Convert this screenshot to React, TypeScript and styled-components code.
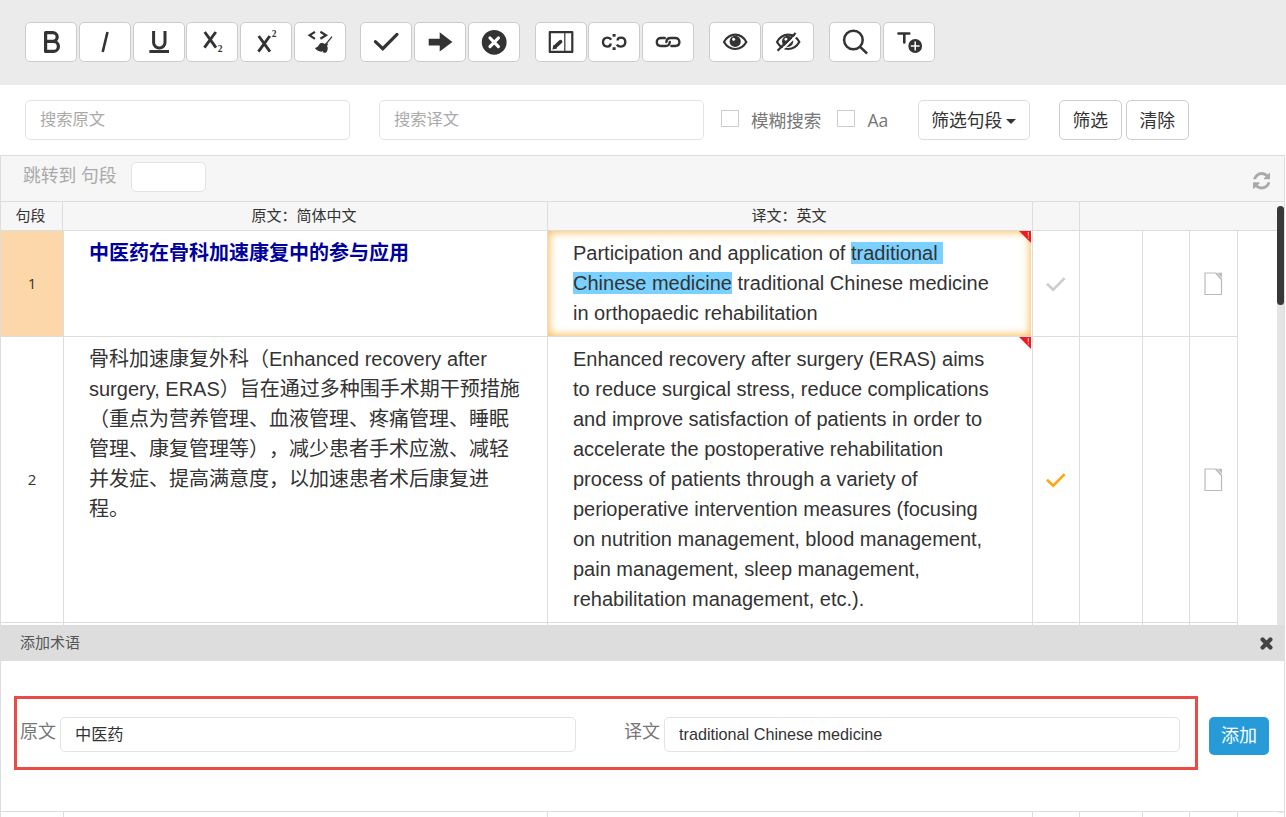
import React from "react";
import styled, { createGlobalStyle } from "styled-components";

const GlobalStyle = createGlobalStyle`
  * { box-sizing: border-box; }
  body {
    margin: 0;
    background: #fff;
    color: #333;
    font-family: "Open Sans", "Noto Sans CJK SC", sans-serif;
    overflow: hidden;
  }
  button, input { font-family: inherit; margin: 0; outline: none; }
`;

const Page = styled.div`
  display: flex;
  flex-direction: column;
  width: 1286px;
  height: 817px;
  overflow: hidden;
`;

const Toolbar = styled.header`
  display: flex;
  align-items: flex-start;
  gap: 14.5px;
  height: 85px;
  padding: 22px 25px 0;
  background: #ebebeb;
`;

const ToolGroup = styled.div`
  display: flex;
  gap: 1.8px;
`;

const ToolButton = styled.button`
  display: flex;
  align-items: center;
  justify-content: center;
  width: 52px;
  height: 40px;
  padding: 0;
  border: 1px solid #ccc;
  border-radius: 5px;
  background: #fff;
  color: #333;
`;

const SearchBar = styled.div`
  display: flex;
  height: 70px;
  padding: 15px 25px 0;
`;

const SearchInput = styled.input`
  width: 325px;
  height: 40px;
  margin-right: 29px;
  padding: 0 14px 2px;
  border: 1px solid #e3e3e3;
  border-radius: 5px;
  font-size: 16.3px;
  color: #333;
  &::placeholder { color: #aaa; opacity: 1; }
  & + & { margin-right: 17px; }
`;

const CheckLabel = styled.label<{ $gap: number }>`
  display: flex;
  align-items: flex-start;
  gap: 12px;
  height: 40px;
  margin-right: ${(p) => p.$gap}px;
  padding-top: 10px;
  color: #777;
  font-size: 17.6px;
  line-height: 20px;
  white-space: nowrap;
`;

const CheckBox = styled.input.attrs({ type: "checkbox" })`
  appearance: none;
  width: 18px;
  height: 17px;
  border: 1px solid #ccc;
  background: #fff;
`;

const FilterButton = styled.button<{ $width: number; $gap: number; $soft?: boolean }>`
  display: flex;
  align-items: center;
  justify-content: center;
  gap: 4px;
  width: ${(p) => p.$width}px;
  height: 40px;
  margin-right: ${(p) => p.$gap}px;
  padding: 0 1px 3px 0;
  border: 1px solid ${(p) => (p.$soft ? "#ddd" : "#ccc")};
  border-radius: 5px;
  background: #fff;
  color: #333;
  font-size: 17.8px;
  white-space: nowrap;
`;

const Caret = styled.i`
  margin-top: 5px;
  border: 5px solid transparent;
  border-top-color: #333;
  border-bottom: 0;
`;

const Editor = styled.main`
  position: relative;
  width: 1285px;
  height: 662px;
  border: 1px solid #ddd;
  border-bottom: 0;
  overflow: hidden;
`;

const JumpBar = styled.div`
  display: flex;
  align-items: flex-start;
  height: 46px;
  padding: 6px 14px 0 22px;
  border-bottom: 1px solid #ddd;
  background: #f6f6f6;
  color: #aaa;
  font-size: 17.8px;
  line-height: 27px;
`;

const JumpInput = styled.input`
  width: 75px;
  height: 30px;
  margin-left: 14px;
  border: 1px solid #e3e3e3;
  border-radius: 5px;
  background: #fff;
`;

const RefreshIcon = styled.svg`
  width: 17.5px;
  height: 17.5px;
  margin: 10px 0 0 auto;
  fill: #aaa;
`;

const HeadRow = styled.div`
  display: grid;
  grid-template-columns: 62px 485px 485px 47px 1fr;
  height: 29px;
  border-bottom: 1px solid #ddd;
  background: #f6f6f6;
`;

const HeadCell = styled.div`
  display: flex;
  align-items: center;
  justify-content: center;
  padding: 0 2px 3px 0;
  border-right: 1px solid #ddd;
  font-size: 15px;
  &:last-child { border-right: 0; }
`;

const Row = styled.div<{ $height: number }>`
  display: grid;
  grid-template-columns: 63px 484px 485px 47px 63px 47px 48px;
  width: 1237px;
  height: ${(p) => p.$height}px;
  border-bottom: 1px solid #ddd;
`;

const Cell = styled.div`
  display: flex;
  align-items: center;
  justify-content: center;
  border-right: 1px solid #ddd;
`;

const NumberCell = styled(Cell)<{ $active?: boolean }>`
  padding-bottom: 2px;
  background: ${(p) => (p.$active ? "#fcd7a9" : "#fff")};
  font-size: 15px;
`;

const TextCell = styled.div<{ $title?: boolean }>`
  position: relative;
  padding: 7px 0 0 25px;
  border-right: 1px solid #ddd;
  color: ${(p) => (p.$title ? "#00009c" : "#333")};
  font-family: "Liberation Sans", "Noto Sans CJK SC", sans-serif;
  font-size: 20px;
  font-weight: ${(p) => (p.$title ? 700 : 400)};
  line-height: 30px;
  white-space: pre;
  text-spacing-trim: space-all;
`;

const Line = styled.div`
  height: 30px;
`;

const Focus = styled.div`
  position: absolute;
  inset: 0 1px 0 0;
  box-shadow: inset 0 0 9px 1px #fdb94e;
`;

const Highlight = styled.mark`
  background: #7ad1ff;
  color: inherit;
`;

const Flag = styled.svg`
  position: absolute;
  top: 0;
  right: 1px;
  width: 12px;
  height: 12px;
`;

const ScrollTrack = styled.div`
  position: absolute;
  top: 50px;
  right: 0;
  width: 7px;
  height: 607px;
  border-radius: 4px;
  background: #e4e4e4;
`;

const ScrollThumb = styled.div`
  height: 99px;
  border-radius: 4px;
  background: #383838;
`;

const TermPanel = styled.section`
  position: absolute;
  left: -1px;
  top: 469px;
  width: 1285px;
  height: 187px;
  border: 1px solid #ddd;
  border-top: 0;
  background: #fff;
`;

const TermHead = styled.div`
  display: flex;
  align-items: center;
  justify-content: space-between;
  height: 36px;
  padding: 0 11px 0 19px;
  background: #ddd;
  color: #555;
  font-size: 15px;
  line-height: 20px;
`;

const TermTitle = styled.span`
  padding-bottom: 2px;
`;

const TermForm = styled.div`
  display: flex;
  align-items: flex-start;
  padding: 35px 15px 0 13px;
`;

const TermFields = styled.div`
  display: flex;
  flex: none;
  width: 1184px;
  height: 74px;
  padding: 18px 0 0 3px;
  border: 3px solid #e84c45;
`;

const TermLabel = styled.label`
  flex: none;
  width: 40px;
  color: #777;
  font-size: 18px;
  line-height: 29px;
  white-space: nowrap;
`;

const TermInput = styled.input<{ $lift?: boolean }>`
  flex: none;
  width: 516px;
  height: 35px;
  margin-right: 48px;
  padding: 0 14px ${(p) => (p.$lift ? 3 : 0)}px;
  border: 1px solid #e3e3e3;
  border-radius: 5px;
  color: #333;
  font-family: "Liberation Sans", "Noto Sans CJK SC", sans-serif;
  font-size: 16.2px;
  &:last-child { margin-right: 0; }
`;

const AddButton = styled.button`
  width: 60px;
  height: 38px;
  margin: 21px 0 0 11px;
  padding: 0 0 5px;
  border: 0;
  border-radius: 5px;
  background: #279bd8;
  color: #fff;
  font-size: 18px;
`;

const IconSvg = styled.svg`
  flex: none;
  width: 32px;
  height: 32px;
  fill: none;
  stroke: currentColor;
  stroke-width: 2.4px;
`;

const Solid = styled.g`
  fill: currentColor;
  stroke: none;
`;

const SmallDigit = styled.text`
  font: 700 9.5px "Liberation Serif", serif;
`;

const EYE = "M5 16c2.7-4.700 6.500-7.300 11.200-7.300S24.700 11.300 27.300 16c-2.600 4.600-6.400 7-11.100 7S7.700 20.600 5 16z";

const toolGroups: React.ReactNode[][] = [
  [
    <path key="bold" strokeWidth="3.2" strokeLinejoin="round" d="M10.6 6.600h7.200a4.400 4.400 0 0 1 0 8.800h-7.200zM10.600 15.400h7.800a5 5 0 0 1 0 10h-7.800z" />,
    <path key="italic" strokeWidth="2.6" d="M13.700 26 18.500 6" />,
    <path key="underline" strokeWidth="3" d="M10.600 5v11.400a5.700 5.600 0 0 0 11.400 0V5M6.400 25.500H26" />,
    <React.Fragment key="sub">
      <path strokeWidth="2.9" d="M8.700 6 20 21.700M19.800 6 8.400 21.700" />
      <Solid><SmallDigit x="21.700" y="26">2</SmallDigit></Solid>
    </React.Fragment>,
    <React.Fragment key="sup">
      <path strokeWidth="2.9" d="M8.700 10 20 25.700M19.800 10 8.400 25.700" />
      <Solid><SmallDigit x="21.700" y="10.600">2</SmallDigit></Solid>
    </React.Fragment>,
    <React.Fragment key="clean">
      <path strokeWidth="2.200" d="M11 5.800 5.600 9.300l5.400 3.500M16.400 5.800l5.600 3.500-5.600 3.500" />
      <path strokeWidth="1.300" d="M28 10.600 22.300 17.600" />
      <Solid>
        <path d="M16 17.500c2-.7 3.600-.4 4.600.4l1.800-1.400 1.600 1.600-.9 1.900c1.200 1.700.6 4.600-.8 6.500-1.400.3-2.800.2-3.800-.3l.7-1.100-2.100.7c-2.400-.6-4.900-1.800-6.200-3.900 2.300-.2 3.200-1.600 5.100-4.400z" />
      </Solid>
    </React.Fragment>,
  ],
  [
    <path key="check" strokeWidth="3.200" strokeLinecap="round" d="m5.400 15.600 7.400 7.100L27 8.400" />,
    <Solid key="next"><path d="M4.700 12.700h11V6.200l12.700 9.700-12.700 9.700v-6H4.700z" /></Solid>,
    <React.Fragment key="cancel">
      <Solid><circle cx="16.200" cy="16.300" r="12.400" /></Solid>
      <path stroke="#fff" strokeWidth="3.200" strokeLinecap="round" d="m12 12 8.400 8.600m0-8.600L12 20.600" />
    </React.Fragment>,
  ],
  [
    <React.Fragment key="edit">
      <path strokeWidth="2.200" strokeLinejoin="round" d="M4.800 6.100h22.500v19.800H4.800z" />
      <path strokeWidth="1.200" d="M19.800 6v20" />
      <path strokeWidth="3.600" strokeLinecap="round" d="m10.200 20.600 5.400-5" />
      <Solid><path d="M7.400 23.600 8.400 19l3.700 3.400z" /></Solid>
    </React.Fragment>,
    <React.Fragment key="unlink">
      <path strokeWidth="2.400" d="M13.300 13.600c-1-1.400-2.200-2-3.900-2-2.700 0-4.400 1.800-4.400 4.500s1.700 4.500 4.400 4.500c1.900 0 3.200-.8 3.200-3" />
      <path strokeWidth="2.400" d="M19.600 14.600c0-2.200 1.300-3 3.200-3 2.700 0 4.500 1.800 4.500 4.500s-1.800 4.500-4.500 4.500c-1.700 0-3-.6-4-2" />
      <Solid><path d="M14.600 7.900h3v2.800h-3zM14.600 21.200h3V24h-3z" /></Solid>
    </React.Fragment>,
    <path key="link" strokeWidth="2.400" strokeLinecap="round" d="M12.800 12H9c-2.500 0-4.200 1.700-4.200 4s1.700 4 4.200 4h4.800c2.400 0 3.800-1.500 4-4M19.400 20h3.800c2.500 0 4.200-1.700 4.200-4s-1.700-4-4.200-4h-4.800c-2.400 0-3.800 1.500-4 4" />,
  ],
  [
    <React.Fragment key="show">
      <path strokeWidth="2.200" d={EYE} />
      <Solid><circle cx="16.200" cy="15.400" r="5.600" /></Solid>
      <circle cx="14.600" cy="13.300" r="1.500" fill="#fff" stroke="none" />
    </React.Fragment>,
    <React.Fragment key="hide">
      <path strokeWidth="2.200" d={EYE} />
      <Solid><circle cx="15.600" cy="15.400" r="5.600" /></Solid>
      <circle cx="14" cy="13.300" r="1.500" fill="#fff" stroke="none" />
      <path stroke="#fff" strokeWidth="2" d="M25.800 8.300 8.500 25.300" />
      <path strokeWidth="2.200" d="M23.600 7 5.500 24.800" />
    </React.Fragment>,
  ],
  [
    <path key="search" strokeWidth="2.500" d="M23.700 14a9.300 9.300 0 1 1-18.600 0 9.300 9.300 0 0 1 18.600 0zM20.800 20.600l7.300 6.900" />,
    <React.Fragment key="term">
      <path strokeWidth="2.600" strokeLinecap="round" d="M5.500 7.500h10.800M11.300 7.500v9" />
      <Solid><circle cx="22.200" cy="20" r="6.900" /></Solid>
      <path stroke="#fff" strokeWidth="1.500" d="M17.800 20H26.600M22.200 15.600v8.800" />
    </React.Fragment>,
  ],
];

const Tick = ({ color }: { color: string }) => (
  <svg width="20" height="16" fill="none" stroke={color} strokeWidth="2.6">
    <path d="m1 7.700 6.200 5.900L18.600 2.200" />
  </svg>
);

const Doc = () => (
  <svg width="19" height="24" fill="none" stroke="#bbb" strokeWidth="1.200">
    <path d="M11.500 1H1v21.500h16.500V7.500zM12.200 1l5.300 6" />
    <path d="M13.300.8h4.700v5z" fill="#bbb" stroke="none" />
  </svg>
);

const WarningFlag = () => (
  <Flag viewBox="0 0 12 12">
    <path d="M0 0h12v12z" fill="#f11a1a" />
    <path d="M9.300 1v4.300M9.300 6.300v1.200" stroke="#fff" strokeWidth=".9" opacity=".85" />
  </Flag>
);

const sourceLines = [
  "骨科加速康复外科（Enhanced recovery after",
  "surgery, ERAS）旨在通过多种围手术期干预措施",
  "（重点为营养管理、血液管理、疼痛管理、睡眠",
  "管理、康复管理等），减少患者手术应激、减轻",
  "并发症、提高满意度，以加速患者术后康复进",
  "程。",
];

const targetLines = [
  "Enhanced recovery after surgery (ERAS) aims",
  "to reduce surgical stress, reduce complications",
  "and improve satisfaction of patients in order to",
  "accelerate the postoperative rehabilitation",
  "process of patients through a variety of",
  "perioperative intervention measures (focusing",
  "on nutrition management, blood management,",
  "pain management, sleep management,",
  "rehabilitation management, etc.).",
];

export default function App() {
  return (
    <Page>
      <GlobalStyle />
      <Toolbar>
        {toolGroups.map((group, i) => (
          <ToolGroup key={i}>
            {group.map((icon, j) => (
              <ToolButton key={j}>
                <IconSvg viewBox="0 0 32 32">{icon}</IconSvg>
              </ToolButton>
            ))}
          </ToolGroup>
        ))}
      </Toolbar>
      <SearchBar>
        <SearchInput placeholder="搜索原文" />
        <SearchInput placeholder="搜索译文" />
        <CheckLabel $gap={16}><CheckBox />模糊搜索</CheckLabel>
        <CheckLabel $gap={30}><CheckBox />Aa</CheckLabel>
        <FilterButton $width={112} $gap={29} $soft>筛选句段<Caret /></FilterButton>
        <FilterButton $width={63} $gap={4}>筛选</FilterButton>
        <FilterButton $width={63} $gap={0}>清除</FilterButton>
      </SearchBar>
      <Editor>
        <JumpBar>
          跳转到 句段
          <JumpInput />
          <RefreshIcon viewBox="0 0 1536 1536">
            <path d="M1511 928q0 5-1 7-64 268-268 434.500t-478 166.500q-146 0-282.500-55t-243.500-157l-129 129q-19 19-45 19t-45-19-19-45v-448q0-26 19-45t45-19h448q26 0 45 19t19 45-19 45l-137 137q71 66 161 102t187 36q134 0 250-65t186-179q11-17 53-117 8-23 30-23h192q13 0 22.500 9.500t9.500 22.500zm25-800v448q0 26-19 45t-45 19h-448q-26 0-45-19t-19-45 19-45l138-138q-148-137-349-137-134 0-250 65t-186 179q-11 17-53 117-8 23-30 23h-199q-13 0-22.500-9.500t-9.500-22.500v-7q65-268 270-434.500t480-166.500q146 0 284 55.500t245 156.500l130-129q19-19 45-19t45 19 19 45z" />
          </RefreshIcon>
        </JumpBar>
        <HeadRow>
          <HeadCell>句段</HeadCell>
          <HeadCell>原文：简体中文</HeadCell>
          <HeadCell>译文：英文</HeadCell>
          <HeadCell />
          <HeadCell />
        </HeadRow>
        <Row $height={106}>
          <NumberCell $active>1</NumberCell>
          <TextCell $title>中医药在骨科加速康复中的参与应用</TextCell>
          <TextCell>
            <Focus />
            <Line>Participation and application of <Highlight>{"traditional "}</Highlight></Line>
            <Line><Highlight>Chinese medicine</Highlight> traditional Chinese medicine</Line>
            <Line>in orthopaedic rehabilitation</Line>
            <WarningFlag />
          </TextCell>
          <Cell><Tick color="#ccc" /></Cell>
          <Cell />
          <Cell />
          <Cell><Doc /></Cell>
        </Row>
        <Row $height={286}>
          <NumberCell>2</NumberCell>
          <TextCell>
            {sourceLines.map((line) => <Line key={line}>{line}</Line>)}
          </TextCell>
          <TextCell>
            {targetLines.map((line) => <Line key={line}>{line}</Line>)}
            <WarningFlag />
          </TextCell>
          <Cell><Tick color="#ffa50f" /></Cell>
          <Cell />
          <Cell />
          <Cell><Doc /></Cell>
        </Row>
        <Row $height={260}>
          <NumberCell />
          <TextCell />
          <TextCell />
          <Cell />
          <Cell />
          <Cell />
          <Cell />
        </Row>
        <ScrollTrack><ScrollThumb /></ScrollTrack>
        <TermPanel>
          <TermHead>
            <TermTitle>添加术语</TermTitle>
            <svg width="13" height="13" stroke="#444" strokeWidth="4.200" strokeLinecap="round">
              <path d="m2.600 2.600 7.800 7.800m0-7.800-7.800 7.800" />
            </svg>
          </TermHead>
          <TermForm>
            <TermFields>
              <TermLabel>原文</TermLabel>
              <TermInput $lift defaultValue="中医药" />
              <TermLabel>译文</TermLabel>
              <TermInput defaultValue="traditional Chinese medicine" />
            </TermFields>
            <AddButton>添加</AddButton>
          </TermForm>
        </TermPanel>
      </Editor>
    </Page>
  );
}
